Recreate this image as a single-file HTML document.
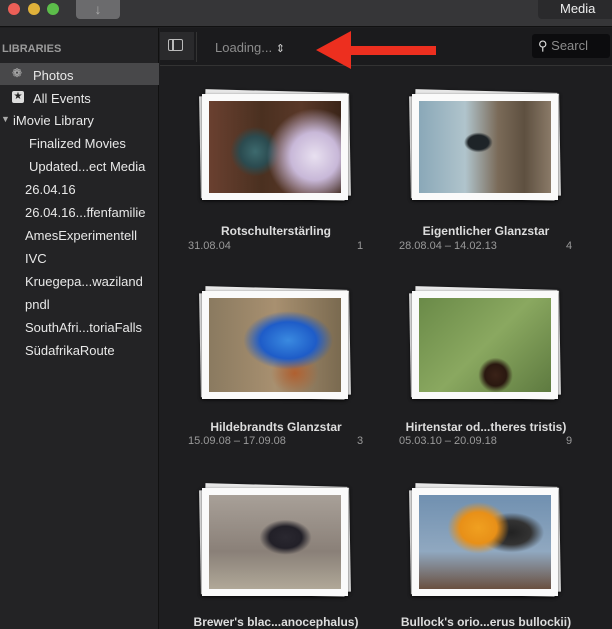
<!DOCTYPE html>
<html><head><meta charset="utf-8"><style>
*{margin:0;padding:0;box-sizing:border-box}
body{width:612px;height:629px;overflow:hidden;background:#1e1e20;font-family:"Liberation Sans",sans-serif;position:relative;color:#e6e6e6}
.a{position:absolute}
.tb{left:0;top:0;width:612px;height:27px;background:#363638;border-bottom:1px solid #111}
.dot{width:12px;height:12px;border-radius:50%;top:3px}
.side{left:0;top:28px;width:159px;height:601px;background:#232325;border-right:1px solid #111}
.si{position:absolute;font-size:13px;color:#e8e8e8;white-space:nowrap}
.tool{left:160px;top:28px;width:452px;height:38px;background:#1b1b1d;border-bottom:1px solid #333}
.stack{position:absolute}
.stack .b1,.stack .b2{position:absolute;background:#e8e8e8;box-shadow:0 1px 3px rgba(0,0,0,.6)}
.stack .f{position:absolute;background:#fafafa;box-shadow:0 1px 3px rgba(0,0,0,.6)}
.stack .p{position:absolute;left:7px;top:7px;right:7px;bottom:7px}
.t{position:absolute;font-size:12px;font-weight:bold;color:#ddd;text-align:center;width:200px}
.d{position:absolute;font-size:11px;color:#9a9a9a}
</style></head><body>
<div class="a tb"></div>
<div class="a dot" style="left:8px;background:#ec5f57"></div>
<div class="a dot" style="left:28px;background:#e0b13a"></div>
<div class="a dot" style="left:47px;background:#5cbd4a"></div>
<div class="a" style="left:76px;top:0;width:44px;height:19px;background:#6b6b6d;border-radius:0 0 4px 4px;color:#aaa;font-size:14px;text-align:center;line-height:18px">↓</div>
<div class="a" style="left:538px;top:0;width:74px;height:19px;background:#2a2a2c;border-radius:0 0 0 4px;color:#eee;font-size:13px;line-height:18px;padding-left:22px">Media</div>
<div class="a side"></div>
<div class="si" style="left:2px;top:43px;font-size:11px;font-weight:bold;color:#9a9a9a">LIBRARIES</div>
<div class="a" style="left:0;top:63px;width:159px;height:22px;background:#48484a"></div>
<div class="si" style="left:12px;top:66px;font-size:12px;color:#bbb">❁</div>
<div class="si" style="left:33px;top:68px">Photos</div>
<div class="a" style="left:12px;top:91px;width:12px;height:12px;background:#ddd;border-radius:2px;color:#222;font-size:10px;line-height:12px;text-align:center">★</div>
<div class="si" style="left:33px;top:91px">All Events</div>
<div class="si" style="left:1px;top:114px;font-size:9px;color:#aaa">▼</div>
<div class="si" style="left:13px;top:113px">iMovie Library</div>
<div class="si" style="left:29px;top:136px">Finalized Movies</div>
<div class="si" style="left:29px;top:159px">Updated...ect Media</div>
<div class="si" style="left:25px;top:182px">26.04.16</div>
<div class="si" style="left:25px;top:205px">26.04.16...ffenfamilie</div>
<div class="si" style="left:25px;top:228px">AmesExperimentell</div>
<div class="si" style="left:25px;top:251px">IVC</div>
<div class="si" style="left:25px;top:274px">Kruegepa...waziland</div>
<div class="si" style="left:25px;top:297px">pndl</div>
<div class="si" style="left:25px;top:320px">SouthAfri...toriaFalls</div>
<div class="si" style="left:25px;top:343px">SüdafrikaRoute</div>
<div class="a tool"></div>
<div class="a" style="left:160px;top:32px;width:34px;height:28px;background:#2a2a2c"></div>
<div class="a" style="left:168px;top:39px;width:15px;height:12px;border:1.5px solid #bbb;border-radius:2px"></div>
<div class="a" style="left:172px;top:39px;width:1.5px;height:12px;background:#bbb"></div>
<div class="a" style="left:196px;top:32px;width:1px;height:30px;background:#333"></div>
<div class="si" style="left:215px;top:40px;color:#8c8c8c">Loading... <span style="color:#ccc;font-size:11px">⇕</span></div>
<svg class="a" style="left:0;top:0" width="612" height="80"><polygon points="316,50 351,31 351,46 436,46 436,55 351,55 351,69" fill="#ed2f1f"/></svg>
<div class="a" style="left:532px;top:34px;width:78px;height:24px;background:#0c0c0e;border-radius:3px"></div>
<div class="si" style="left:538px;top:38px;color:#8c8c8c"><span style="color:#ddd">⚲</span> Searcl</div>

<div class="stack" style="left:200px;top:91px;width:152px;height:110px">
<div class="b1" style="left:4px;top:0;width:142px;height:108px;transform:rotate(1.5deg)"></div>
<div class="b2" style="left:0;top:4px;width:150px;height:102px;transform:rotate(-1deg)"></div>
<div class="f" style="left:2px;top:3px;width:146px;height:106px"><div class="p" style="background:radial-gradient(circle at 80% 60%,#e8e0f0 0,#c8b8d8 20%,transparent 40%),radial-gradient(circle at 35% 55%,#3d6a6e 0,#2b4b50 15%,transparent 25%),linear-gradient(90deg,#6a4030,#4a3020 40%,#5a3828 70%,#3a2418)"></div></div>
</div>
<div class="t" style="left:176px;top:224px">Rotschulterstärling</div>
<div class="d" style="left:188px;top:240px">31.08.04</div>
<div class="d" style="left:357px;top:240px">1</div>

<div class="stack" style="left:410px;top:91px;width:152px;height:110px">
<div class="b1" style="left:4px;top:0;width:142px;height:108px;transform:rotate(1.5deg)"></div>
<div class="b2" style="left:0;top:4px;width:150px;height:102px;transform:rotate(-1deg)"></div>
<div class="f" style="left:2px;top:3px;width:146px;height:106px"><div class="p" style="background:radial-gradient(ellipse at 45% 45%,#1e2428 0,#1e2428 10%,transparent 14%),linear-gradient(90deg,#8aa8b8,#b0c4cc 35%,#7a6a58 60%,#5e5040 80%,#8a7a68)"></div></div>
</div>
<div class="t" style="left:386px;top:224px">Eigentlicher Glanzstar</div>
<div class="d" style="left:399px;top:240px">28.08.04 – 14.02.13</div>
<div class="d" style="left:566px;top:240px">4</div>

<div class="stack" style="left:200px;top:288px;width:152px;height:112px">
<div class="b1" style="left:4px;top:0;width:142px;height:110px;transform:rotate(1.5deg)"></div>
<div class="b2" style="left:0;top:4px;width:150px;height:104px;transform:rotate(-1deg)"></div>
<div class="f" style="left:2px;top:3px;width:146px;height:108px"><div class="p" style="background:radial-gradient(ellipse at 60% 45%,#3a8ae0 0,#1e5cc8 25%,transparent 40%),radial-gradient(ellipse at 65% 80%,#b06030 0,transparent 20%),linear-gradient(90deg,#8a7a60,#a89070 50%,#7a6a50)"></div></div>
</div>
<div class="t" style="left:176px;top:420px">Hildebrandts Glanzstar</div>
<div class="d" style="left:188px;top:435px">15.09.08 – 17.09.08</div>
<div class="d" style="left:357px;top:435px">3</div>

<div class="stack" style="left:410px;top:288px;width:152px;height:112px">
<div class="b1" style="left:4px;top:0;width:142px;height:110px;transform:rotate(1.5deg)"></div>
<div class="b2" style="left:0;top:4px;width:150px;height:104px;transform:rotate(-1deg)"></div>
<div class="f" style="left:2px;top:3px;width:146px;height:108px"><div class="p" style="background:radial-gradient(ellipse at 58% 82%,#3a2218 0,#2a1810 10%,transparent 16%),linear-gradient(135deg,#6a8a48,#8aa860 50%,#5e7a40)"></div></div>
</div>
<div class="t" style="left:386px;top:420px">Hirtenstar od...theres tristis)</div>
<div class="d" style="left:399px;top:435px">05.03.10 – 20.09.18</div>
<div class="d" style="left:566px;top:435px">9</div>

<div class="stack" style="left:200px;top:485px;width:152px;height:112px">
<div class="b1" style="left:4px;top:0;width:142px;height:110px;transform:rotate(1.5deg)"></div>
<div class="b2" style="left:0;top:4px;width:150px;height:104px;transform:rotate(-1deg)"></div>
<div class="f" style="left:2px;top:3px;width:146px;height:108px"><div class="p" style="background:radial-gradient(ellipse at 58% 45%,#2a2830 0,#222028 15%,transparent 24%),linear-gradient(180deg,#a8a098,#8a8078 60%,#b0a898)"></div></div>
</div>
<div class="t" style="left:176px;top:615px">Brewer's blac...anocephalus)</div>

<div class="stack" style="left:410px;top:485px;width:152px;height:112px">
<div class="b1" style="left:4px;top:0;width:142px;height:110px;transform:rotate(1.5deg)"></div>
<div class="b2" style="left:0;top:4px;width:150px;height:104px;transform:rotate(-1deg)"></div>
<div class="f" style="left:2px;top:3px;width:146px;height:108px"><div class="p" style="background:radial-gradient(ellipse at 45% 35%,#f0a020 0,#e89018 18%,transparent 30%),radial-gradient(ellipse at 70% 40%,#222 0,#333 15%,transparent 25%),linear-gradient(180deg,#7090b0,#90a8c0 60%,#6a5040)"></div></div>
</div>
<div class="t" style="left:386px;top:615px">Bullock's orio...erus bullockii)</div>
</body></html>
